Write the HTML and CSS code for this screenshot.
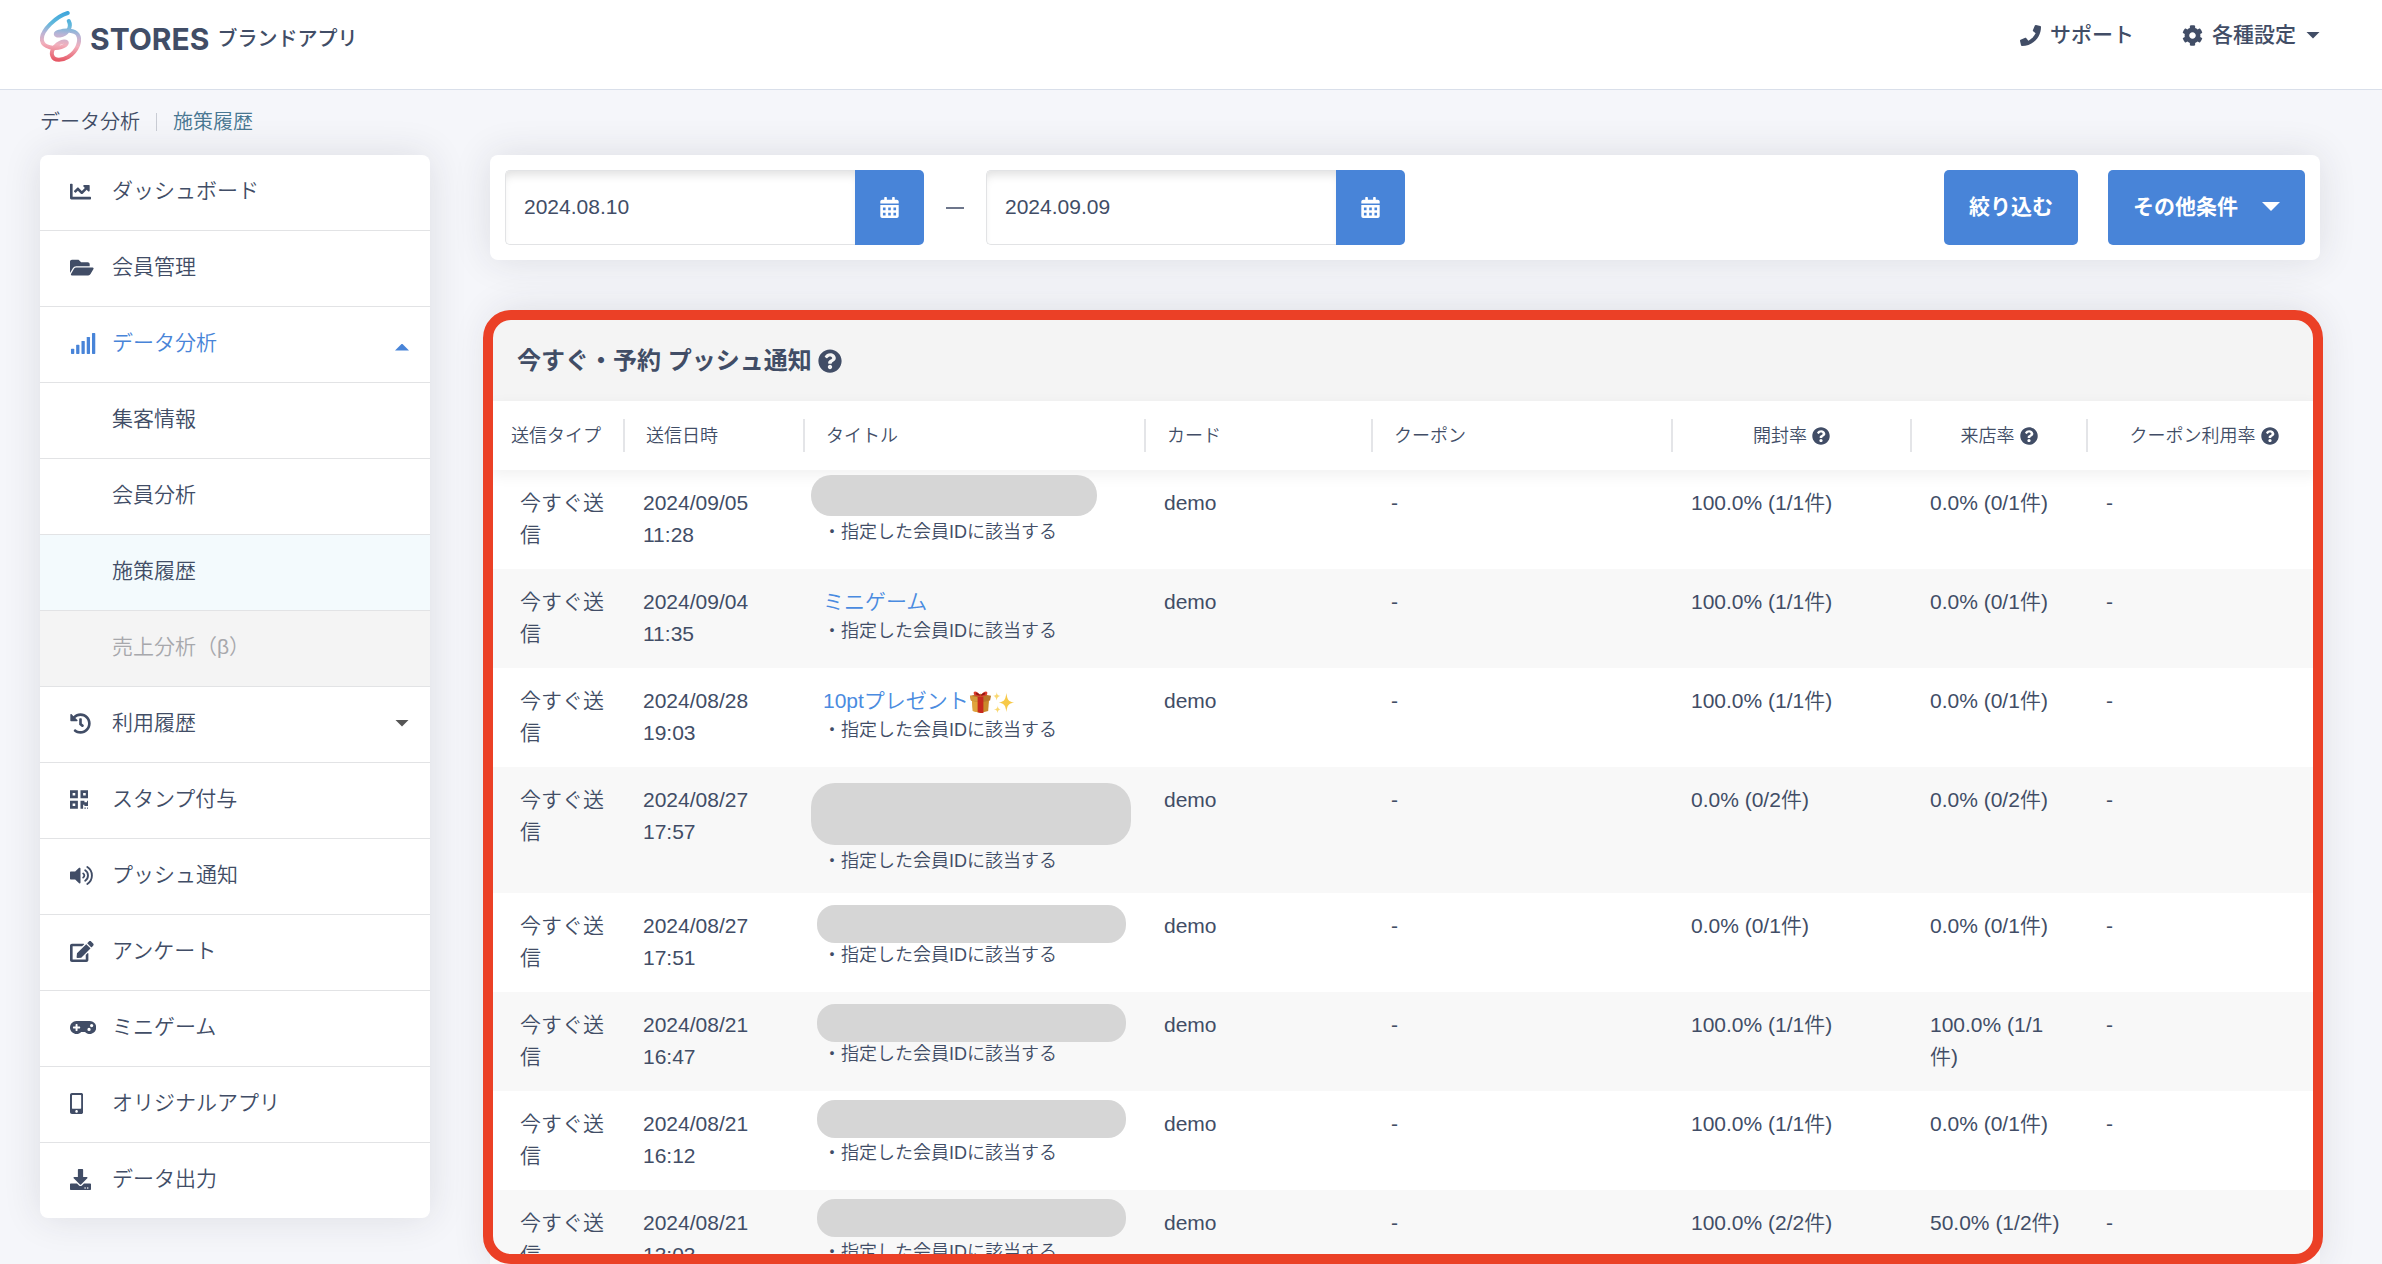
FILE: index.html
```html
<!DOCTYPE html>
<html lang="ja">
<head>
<meta charset="utf-8">
<meta name="viewport" content="width=device-width, initial-scale=1">
<title>施策履歴 | STORES ブランドアプリ</title>
<link rel="stylesheet" href="styles.css">
</head>
<body>
<svg class="sprite" aria-hidden="true">
  <symbol id="i-help" viewBox="0 0 512 512"><path d="M504 256c0 136.997-111.043 248-248 248S8 392.997 8 256C8 119.083 119.043 8 256 8s248 111.083 248 248zM262.655 90c-54.497 0-89.255 22.957-116.549 63.758-3.536 5.286-2.353 12.415 2.715 16.258l34.699 26.31c5.205 3.947 12.621 3.008 16.665-2.122 17.864-22.658 30.113-35.797 57.303-35.797 20.429 0 45.698 13.148 45.698 32.958 0 14.976-12.363 22.667-32.534 33.976C247.128 238.528 216 254.941 216 296v4c0 6.627 5.373 12 12 12h56c6.627 0 12-5.373 12-12v-1.333c0-28.462 83.186-29.647 83.186-106.667 0-58.002-60.165-102-116.531-102zM256 338c-25.365 0-46 20.635-46 46 0 25.364 20.635 46 46 46s46-20.636 46-46c0-25.365-20.635-46-46-46z"/></symbol>
  <symbol id="i-calendar" viewBox="0 0 448 512"><path fill-rule="evenodd" d="M0 464c0 26.500 21.500 48 48 48h352c26.500 0 48-21.500 48-48V192H0zM64 256h64v64H64zM192 256h64v64h-64zM320 256h64v64h-64zM64 384h64v64H64zM192 384h64v64h-64zM320 384h64v64h-64zM400 64h-48V16c0-8.800-7.200-16-16-16h-32c-8.800 0-16 7.200-16 16v48H160V16c0-8.800-7.200-16-16-16h-32c-8.800 0-16 7.200-16 16v48H48C21.500 64 0 85.500 0 112v48h448v-48c0-26.500-21.500-48-48-48z"/></symbol>
</svg>
<div class="app">
  <header class="topbar">
    <a class="brand" href="#">
      <svg class="brand-mark" viewBox="120 33 124 154" aria-hidden="true">
        <defs><linearGradient id="brand-gradient" gradientUnits="userSpaceOnUse" x1="190" y1="35" x2="175" y2="187"><stop offset="0" stop-color="#3fa6dc"/><stop offset="0.250" stop-color="#5fb8dc"/><stop offset="0.450" stop-color="#b9b4d6"/><stop offset="0.660" stop-color="#f2b0bd"/><stop offset="1" stop-color="#e5515f"/></linearGradient></defs>
        <path d="M204 39C172 48 121 92 126 122C130 144 166 148 184 142C203 136 206 124 193 125C176 127 150 148 157 168C163 187 190 181 205 172C234 153 245 122 234 104C225 90 196 90 180 95C163 99 164 109 180 107C202 104 217 82 207 63" fill="none" stroke="url(#brand-gradient)" stroke-width="12" stroke-linecap="round" stroke-linejoin="round"/>
      </svg>
      <span class="brand-name">STORES</span>
      <span class="brand-product">ブランドアプリ</span>
    </a>
    <nav class="topnav" aria-label="ヘッダー">
      <a href="#"><svg class="icon" viewBox="0 0 512 512" aria-hidden="true"><path d="M493.400 24.600l-104-24c-11.300-2.600-22.900 3.300-27.500 13.900l-48 112c-4.200 9.800-1.400 21.300 6.900 28l60.600 49.600c-36 76.700-98.900 140.500-177.200 177.200l-49.600-60.600c-6.800-8.300-18.200-11.100-28-6.900l-112 48C3.900 366.500-2 378.100.6 389.400l24 104C27.100 504.200 36.700 512 48 512c256.100 0 464-207.500 464-464 0-11.200-7.700-20.900-18.600-23.400z"/></svg>サポート</a>
      <a href="#"><svg class="icon" viewBox="0 0 512 512" aria-hidden="true"><path d="M487.400 315.700l-42.600-24.600c4.300-23.200 4.300-47 0-70.200l42.600-24.600c4.900-2.800 7.100-8.600 5.500-14-11.100-35.600-30-67.800-54.700-94.600-3.800-4.100-10-5.100-14.800-2.300L380.800 110c-17.900-15.400-38.500-27.300-60.800-35.100V25.800c0-5.600-3.900-10.500-9.400-11.700-36.700-8.200-74.300-7.800-109.200 0-5.500 1.200-9.400 6.100-9.400 11.700V75c-22.200 7.900-42.800 19.800-60.800 35.100L88.700 85.500c-4.900-2.800-11-1.900-14.800 2.300-24.700 26.700-43.600 58.900-54.700 94.600-1.700 5.400.6 11.200 5.500 14L67.300 221c-4.300 23.200-4.300 47 0 70.200l-42.600 24.600c-4.900 2.800-7.100 8.600-5.500 14 11.100 35.600 30 67.800 54.700 94.600 3.800 4.100 10 5.100 14.800 2.300l42.600-24.600c17.900 15.400 38.500 27.300 60.800 35.100v49.200c0 5.600 3.900 10.500 9.400 11.700 36.700 8.200 74.300 7.800 109.200 0 5.500-1.200 9.400-6.100 9.400-11.700v-49.200c22.200-7.900 42.800-19.800 60.800-35.100l42.600 24.600c4.900 2.800 11 1.900 14.800-2.300 24.700-26.700 43.600-58.900 54.700-94.600 1.500-5.500-.7-11.300-5.600-14.100zM256 336c-44.100 0-80-35.900-80-80s35.900-80 80-80 80 35.900 80 80-35.900 80-80 80z"/></svg>各種設定<span class="caret"></span></a>
    </nav>
  </header>

  <nav class="breadcrumb" aria-label="パンくず">
    <a href="#">データ分析</a>
    <a class="is-current" href="#" aria-current="page">施策履歴</a>
  </nav>

  <div class="layout">
    <nav class="sidebar" aria-label="メインメニュー">
      <ul class="menu">
        <li><a href="#"><span class="menu-icon"><svg viewBox="0 0 512 512" aria-hidden="true"><path d="M496 384H64V80c0-8.840-7.160-16-16-16H16C7.160 64 0 71.160 0 80v336c0 17.670 14.330 32 32 32h464c8.840 0 16-7.160 16-16v-32c0-8.840-7.160-16-16-16zM464 96H345.940c-21.380 0-32.090 25.850-16.970 40.970l32.400 32.400L288 242.750l-73.370-73.370c-12.500-12.500-32.760-12.500-45.250 0l-68.690 68.690c-6.250 6.250-6.250 16.380 0 22.630l22.620 22.620c6.250 6.250 16.380 6.250 22.630 0L192 237.250l73.370 73.370c12.500 12.500 32.760 12.500 45.250 0l96-96 32.400 32.400c15.120 15.120 40.970 4.410 40.970-16.970V112c.01-8.840-7.150-16-15.990-16z"/></svg></span>ダッシュボード</a></li>
        <li><a href="#"><span class="menu-icon"><svg viewBox="0 0 576 512" aria-hidden="true"><path d="M572.694 292.093L500.270 416.248A63.997 63.997 0 0 1 444.989 448H45.025c-18.523 0-30.064-20.093-20.731-36.093l72.424-124.155A64 64 0 0 1 152 256h399.964c18.523 0 30.064 20.093 20.730 36.093zM152 224h328v-48c0-26.510-21.490-48-48-48H272l-64-64H48C21.490 64 0 85.490 0 112v278.046l69.077-118.418C86.214 242.250 117.989 224 152 224z"/></svg></span>会員管理</a></li>
        <li>
          <a class="is-open" href="#" aria-expanded="true"><span class="menu-icon"><svg viewBox="0 0 640 512" aria-hidden="true"><rect x="24" y="384" width="80" height="128" rx="16"/><rect x="150" y="288" width="80" height="224" rx="16"/><rect x="280" y="192" width="80" height="320" rx="16"/><rect x="408" y="96" width="80" height="416" rx="16"/><rect x="536" y="0" width="80" height="512" rx="16"/></svg></span>データ分析<span class="caret caret-up"></span></a>
          <ul class="submenu">
            <li><a href="#">集客情報</a></li>
            <li><a href="#">会員分析</a></li>
            <li><a class="is-active" href="#">施策履歴</a></li>
            <li><a class="is-disabled" href="#" aria-disabled="true">売上分析（β）</a></li>
          </ul>
        </li>
        <li><a href="#" aria-expanded="false"><span class="menu-icon"><svg viewBox="0 0 512 512" aria-hidden="true"><path d="M504 255.531c.253 136.640-111.180 248.372-247.820 248.468-59.015.042-113.223-20.530-155.822-54.911-11.077-8.940-11.905-25.541-1.839-35.607l11.267-11.267c8.609-8.609 22.353-9.551 31.891-1.984C173.062 425.135 212.781 440 256 440c101.705 0 184-82.311 184-184 0-101.705-82.311-184-184-184-48.814 0-93.149 18.969-126.068 49.932l50.754 50.754c10.080 10.080 2.941 27.314-11.313 27.314H24c-8.837 0-16-7.163-16-16V38.627c0-14.254 17.234-21.393 27.314-11.314l49.372 49.372C129.209 34.136 189.552 8 256 8c136.810 0 247.747 110.780 248 247.531zm-180.912 78.784l9.823-12.630c8.138-10.463 6.253-25.542-4.210-33.679L288 256.349V152c0-13.255-10.745-24-24-24h-16c-13.255 0-24 10.745-24 24v135.651l65.409 50.874c10.463 8.137 25.541 6.253 33.679-4.210z"/></svg></span>利用履歴<span class="caret caret-gray"></span></a></li>
        <li><a href="#"><span class="menu-icon"><svg viewBox="0 0 448 512" aria-hidden="true"><path d="M0 224h192V32H0v192zM64 96h64v64H64V96zm192-64v192h192V32H256zm128 128h-64V96h64v64zM0 480h192V288H0v192zm64-128h64v64H64v-64zm352-64h32v128h-96v-32h-32v96h-64V288h96v32h64v-32zm0 160h32v32h-32v-32zm-64 0h32v32h-32v-32z"/></svg></span>スタンプ付与</a></li>
        <li><a href="#"><span class="menu-icon"><svg viewBox="0 0 576 512" aria-hidden="true"><path d="M215.030 71.050L126.060 160H24c-13.260 0-24 10.740-24 24v144c0 13.250 10.740 24 24 24h102.060l88.970 88.950c15.030 15.030 40.970 4.470 40.970-16.970V88.020c0-21.460-25.960-31.980-40.970-16.970z"/><path d="M322 208a56 56 0 0 1 0 96M370 130a150 150 0 0 1 0 252M422 50a245 245 0 0 1 0 412" fill="none" stroke="currentColor" stroke-width="46" stroke-linecap="round"/></svg></span>プッシュ通知</a></li>
        <li><a href="#"><span class="menu-icon"><svg viewBox="0 0 576 512" aria-hidden="true"><path d="M402.600 83.200l90.200 90.200c3.800 3.800 3.800 10 0 13.800L274.400 405.600l-92.800 10.300c-12.400 1.400-22.900-9.100-21.500-21.500l10.300-92.800L388.800 83.200c3.800-3.800 10-3.800 13.800 0zm162-22.900l-48.800-48.800c-15.200-15.200-39.900-15.200-55.200 0l-35.400 35.400c-3.800 3.800-3.800 10 0 13.800l90.200 90.200c3.800 3.800 10 3.800 13.800 0l35.400-35.400c15.200-15.300 15.200-40 0-55.200zM384 346.200V448H64V128h229.800c3.200 0 6.200-1.300 8.500-3.500l40-40c7.600-7.600 2.200-20.500-8.500-20.500H48C21.500 64 0 85.500 0 112v352c0 26.500 21.500 48 48 48h352c26.500 0 48-21.500 48-48V306.200c0-10.700-12.900-16-20.500-8.500l-40 40c-2.200 2.300-3.500 5.300-3.500 8.500z"/></svg></span>アンケート</a></li>
        <li><a href="#"><span class="menu-icon"><svg viewBox="0 0 640 512" aria-hidden="true"><path d="M480.070 96H160a160 160 0 1 0 114.240 272h91.500A160 160 0 1 0 480.070 96zM248 268a12 12 0 0 1-12 12h-52v52a12 12 0 0 1-12 12h-24a12 12 0 0 1-12-12v-52H84a12 12 0 0 1-12-12v-24a12 12 0 0 1 12-12h52v-52a12 12 0 0 1 12-12h24a12 12 0 0 1 12 12v52h52a12 12 0 0 1 12 12zm216 76a40 40 0 1 1 40-40 40 40 0 0 1-40 40zm64-96a40 40 0 1 1 40-40 40 40 0 0 1-40 40z"/></svg></span>ミニゲーム</a></li>
        <li><a href="#"><span class="menu-icon"><svg viewBox="0 0 320 512" aria-hidden="true"><path d="M272 0H48C21.500 0 0 21.500 0 48v416c0 26.500 21.500 48 48 48h224c26.500 0 48-21.500 48-48V48c0-26.500-21.500-48-48-48zM160 480c-17.700 0-32-14.300-32-32s14.300-32 32-32 32 14.300 32 32-14.300 32-32 32zm112-108c0 6.600-5.400 12-12 12H60c-6.600 0-12-5.400-12-12V60c0-6.600 5.400-12 12-12h200c6.600 0 12 5.400 12 12v312z"/></svg></span>オリジナルアプリ</a></li>
        <li><a href="#"><span class="menu-icon"><svg viewBox="0 0 512 512" aria-hidden="true"><path d="M216 0h80c13.300 0 24 10.700 24 24v168h87.700c17.800 0 26.700 21.500 14.100 34.100L269.700 378.300c-7.500 7.500-19.800 7.500-27.300 0L90.100 226.100c-12.600-12.600-3.700-34.100 14.100-34.100H192V24c0-13.300 10.700-24 24-24zm296 376v112c0 13.300-10.700 24-24 24H24c-13.300 0-24-10.700-24-24V376c0-13.300 10.700-24 24-24h146.700l49 49c20.100 20.100 52.500 20.100 72.600 0l49-49H488c13.300 0 24 10.700 24 24zm-124 88c0-11-9-20-20-20s-20 9-20 20 9 20 20 20 20-9 20-20zm64 0c0-11-9-20-20-20s-20 9-20 20 9 20 20 20 20-9 20-20z"/></svg></span>データ出力</a></li>
      </ul>
    </nav>

    <main class="main">
      <form class="filter">
        <div class="date-field">
          <input type="text" value="2024.08.10" aria-label="開始日">
          <button type="button" aria-label="開始日を選択"><svg class="icon-calendar" aria-hidden="true"><use href="#i-calendar"/></svg></button>
        </div>
        <span class="range-dash"></span>
        <div class="date-field">
          <input type="text" value="2024.09.09" aria-label="終了日">
          <button type="button" aria-label="終了日を選択"><svg class="icon-calendar" aria-hidden="true"><use href="#i-calendar"/></svg></button>
        </div>
        <div class="filter-actions">
          <button class="btn" type="button">絞り込む</button>
          <button class="btn" type="button">その他条件<span class="caret caret-large"></span></button>
        </div>
      </form>

      <section class="history" aria-labelledby="history-title">
        <div class="card">
          <h2 class="card-title" id="history-title">今すぐ・予約 プッシュ通知<svg class="help" aria-hidden="true"><use href="#i-help"/></svg></h2>
          <table class="history-table">
            <colgroup><col class="col-type"><col class="col-date"><col class="col-title"><col class="col-card"><col class="col-coupon"><col class="col-open"><col class="col-visit"><col class="col-usage"></colgroup>
            <thead>
              <tr>
                <th><span>送信タイプ</span></th>
                <th><span>送信日時</span></th>
                <th><span>タイトル</span></th>
                <th><span>カード</span></th>
                <th><span>クーポン</span></th>
                <th class="center"><span>開封率<svg class="help" aria-hidden="true"><use href="#i-help"/></svg></span></th>
                <th class="center"><span>来店率<svg class="help" aria-hidden="true"><use href="#i-help"/></svg></span></th>
                <th class="center"><span>クーポン利用率<svg class="help" aria-hidden="true"><use href="#i-help"/></svg></span></th>
              </tr>
            </thead>
            <tbody>
              <tr><td>今すぐ送信</td><td>2024/09/05 11:28</td><td><div class="title"><span class="mask mask-first"></span></div><div class="target">・指定した会員IDに該当する</div></td><td>demo</td><td>-</td><td>100.0% (1/1件)</td><td>0.0% (0/1件)</td><td>-</td></tr>
              <tr><td>今すぐ送信</td><td>2024/09/04 11:35</td><td><div class="title"><a href="#">ミニゲーム</a></div><div class="target">・指定した会員IDに該当する</div></td><td>demo</td><td>-</td><td>100.0% (1/1件)</td><td>0.0% (0/1件)</td><td>-</td></tr>
              <tr><td>今すぐ送信</td><td>2024/08/28 19:03</td><td><div class="title"><a href="#">10ptプレゼント<svg class="emoji" viewBox="0 0 24 24" role="img" aria-label="プレゼント"><path d="M3 9h18l-1 13-8 2-8-2z" fill="#c98a2b"/><path d="M3 9l9 2v13l-8-2z" fill="#e0a33c"/><path d="M1 6l11-2 11 2-1 5-10 2-10-2z" fill="#b9772a"/><path d="M1 6l11 2v5l-10-2z" fill="#d59a3a"/><path d="M9 7h6v17l-3 0-3-1z" fill="#c8291f"/><path d="M12 6C9 1 4 0 5 4c0 2 4 3 7 3 3 0 7-1 7-3 1-4-4-3-7 2z" fill="#dc3a2c"/><path d="M12 6c-2-3-5-4-5-2 0 1 3 2 5 2 2 0 5-1 5-2 0-2-3-1-5 2z" fill="#8f1812"/></svg><svg class="emoji" viewBox="0 0 24 24" role="img" aria-label="キラキラ"><path d="M15 3c1 7 2 9 8 10-6 1-7 3-8 10-1-7-2-9-8-10 6-1 7-3 8-10z" fill="#f7c948"/><path d="M5 1c0 4 1 5 4 5-3 1-4 2-4 5-1-3-1-4-4-5 3 0 4-1 4-5zM6 16c0 3 1 4 3 4-2 1-3 1-3 4-1-3-1-3-4-4 3 0 4-1 4-4z" fill="#f9d871"/></svg></a></div><div class="target">・指定した会員IDに該当する</div></td><td>demo</td><td>-</td><td>100.0% (1/1件)</td><td>0.0% (0/1件)</td><td>-</td></tr>
              <tr><td>今すぐ送信</td><td>2024/08/27 17:57</td><td><div class="title title-double"><span class="mask mask-double"></span></div><div class="target">・指定した会員IDに該当する</div></td><td>demo</td><td>-</td><td>0.0% (0/2件)</td><td>0.0% (0/2件)</td><td>-</td></tr>
              <tr><td>今すぐ送信</td><td>2024/08/27 17:51</td><td><div class="title"><span class="mask"></span></div><div class="target">・指定した会員IDに該当する</div></td><td>demo</td><td>-</td><td>0.0% (0/1件)</td><td>0.0% (0/1件)</td><td>-</td></tr>
              <tr><td>今すぐ送信</td><td>2024/08/21 16:47</td><td><div class="title"><span class="mask"></span></div><div class="target">・指定した会員IDに該当する</div></td><td>demo</td><td>-</td><td>100.0% (1/1件)</td><td>100.0% (1/1件)</td><td>-</td></tr>
              <tr><td>今すぐ送信</td><td>2024/08/21 16:12</td><td><div class="title"><span class="mask mask-high"></span></div><div class="target">・指定した会員IDに該当する</div></td><td>demo</td><td>-</td><td>100.0% (1/1件)</td><td>0.0% (0/1件)</td><td>-</td></tr>
              <tr><td>今すぐ送信</td><td>2024/08/21 13:03</td><td><div class="title"><span class="mask mask-high"></span></div><div class="target">・指定した会員IDに該当する</div></td><td>demo</td><td>-</td><td>100.0% (2/2件)</td><td>50.0% (1/2件)</td><td>-</td></tr>
            </tbody>
          </table>
        </div>
        <div class="highlight" aria-hidden="true"></div>
      </section>
    </main>
  </div>
</div>
</body>
</html>
```
FILE: styles.css
```css
:root {
  --text: #414d66;
  --blue: #4884d8;
  --line: #e2e3e5;
  --page: #f5f6fa;
  --shadow: 0 0 38px rgba(40, 40, 60, 0.12);
}

* {
  box-sizing: border-box;
}

body {
  margin: 0;
  background: var(--page);
  color: var(--text);
  font-family: "Liberation Sans", "Noto Sans CJK JP", sans-serif;
  font-size: 21px;
  font-weight: 350;
  line-height: 32px;
}

a {
  color: inherit;
  text-decoration: none;
}

ul {
  margin: 0;
  padding: 0;
  list-style: none;
}

button,
input {
  margin: 0;
  font: inherit;
  color: inherit;
}

svg {
  fill: currentColor;
}

.sprite {
  display: none;
}

.app {
  display: flex;
  flex-direction: column;
  height: 100vh;
  overflow: hidden;
}

/* Header */
.topbar {
  display: flex;
  flex: none;
  align-items: flex-start;
  justify-content: space-between;
  padding: 11px 62px 27px 40px;
  border-bottom: 1px solid #d9dfea;
  background: #fff;
}

.brand {
  display: flex;
  align-items: center;
}

.brand span {
  padding-top: 5px;
}

.brand-mark {
  width: 41px;
  height: 51px;
  margin-right: 9px;
}

.brand-name {
  margin-right: 8px;
  font-family: Inter, "Liberation Sans", sans-serif;
  font-size: 30px;
  font-weight: 700;
}

.brand-product {
  font-size: 20px;
  font-weight: 500;
}

.topnav {
  display: flex;
  gap: 48px;
  padding-top: 8px;
  font-weight: 500;
}

.topnav a {
  display: flex;
  align-items: center;
}

.icon {
  width: 21px;
  height: 21px;
  margin-right: 9px;
}

.caret {
  width: 14px;
  height: 7px;
  background: currentColor;
  clip-path: polygon(0 0, 100% 0, 50% 100%);
}

.topnav .caret {
  margin-left: 10px;
}

.caret-up {
  margin-top: 8px;
  clip-path: polygon(0 100%, 100% 100%, 50% 0);
}

.caret-gray {
  background: #555;
}

.caret-large {
  width: 18px;
  height: 9px;
}

/* Breadcrumb */
.breadcrumb {
  display: flex;
  flex: none;
  align-items: center;
  padding: 16px 40px 17px;
  font-size: 20px;
}

.breadcrumb .is-current {
  display: flex;
  align-items: center;
  color: #487792;
}

.breadcrumb .is-current::before {
  width: 1px;
  height: 18px;
  margin: 0 16px;
  background: #c9ccd4;
  content: "";
}

/* Page columns */
.layout {
  display: grid;
  flex: 1;
  grid-template-columns: 390px minmax(0, 1fr);
  gap: 60px;
  min-height: 0;
  padding: 0 62px 0 40px;
}

.sidebar {
  align-self: start;
  overflow: hidden;
  border-radius: 8px;
  background: #fff;
  box-shadow: var(--shadow);
}

.menu a {
  display: flex;
  align-items: center;
  padding: 20px 21px 23px 30px;
  border-bottom: 1px solid var(--line);
}

.menu > li:last-child > a {
  border-bottom: 0;
}

.menu-icon {
  display: flex;
  width: 42px;
}

.menu-icon svg {
  height: 21px;
}

.menu .caret {
  margin-left: auto;
}

.menu .is-open {
  color: var(--blue);
}

.menu .submenu a {
  padding-left: 72px;
}

.menu .is-active {
  background: #f3fafd;
}

.menu .is-disabled {
  background: #f4f4f4;
  color: #a7a8ac;
}

/* Filter bar */
.main {
  display: flex;
  flex-direction: column;
  min-height: 0;
}

.filter {
  display: flex;
  flex: none;
  align-items: center;
  padding: 15px;
  border-radius: 8px;
  background: #fff;
  box-shadow: var(--shadow);
}

.date-field {
  display: flex;
  height: 75px;
}

.date-field input {
  width: 350px;
  padding: 0 18px 2px;
  border: 1px solid var(--line);
  border-right: 0;
  border-radius: 5px 0 0 5px;
  outline: 0;
  background: #fff;
  box-shadow: inset 0 8px 10px -4px rgba(0, 0, 0, 0.12);
}

.date-field button {
  display: flex;
  align-items: center;
  justify-content: center;
  width: 69px;
  padding: 0;
  border: 0;
  border-radius: 0 5px 5px 0;
  background: var(--blue);
  color: #fff;
}

.icon-calendar {
  width: 19px;
  height: 21px;
}

.range-dash {
  width: 18px;
  height: 2px;
  margin: 0 22px;
  background: #6d768b;
}

.filter-actions {
  display: flex;
  gap: 30px;
  margin-left: auto;
}

.btn {
  display: flex;
  align-items: center;
  gap: 24px;
  height: 75px;
  padding: 0 25px 2px;
  border: 0;
  border-radius: 5px;
  background: var(--blue);
  color: #fff;
  font-weight: 700;
}

/* Push notification history */
.history {
  position: relative;
  flex: 1;
  min-height: 0;
  margin-top: 50px;
}

.highlight {
  position: absolute;
  inset: 0 -3px 0 -7px;
  z-index: 3;
  border: 10px solid #eb4026;
  border-radius: 28px;
  pointer-events: none;
}

.card {
  height: 100%;
  overflow: hidden;
  border-radius: 28px 28px 0 0;
  background: #fff;
  box-shadow: var(--shadow);
}

.card-title {
  display: flex;
  align-items: center;
  margin: 0;
  padding: 35px 27px 24px;
  background: #f4f4f4;
  font-size: 24px;
  font-weight: 700;
}

.card-title .help {
  width: 24px;
  height: 24px;
  margin-left: 6px;
}

.history-table {
  width: 100%;
  border-spacing: 0;
  table-layout: fixed;
}

.col-type {
  width: 135px;
}

.col-date {
  width: 180px;
}

.col-title {
  width: 341px;
}

.col-card {
  width: 227px;
}

.col-coupon {
  width: 300px;
}

.col-open {
  width: 239px;
}

.col-visit {
  width: 176px;
}

.col-usage {
  width: 232px;
}

.history-table thead {
  position: relative;
  z-index: 1;
  background: #fff;
  box-shadow: 0 5px 15px rgba(0, 0, 0, 0.06);
}

.history-table th {
  padding: 18px 0;
  font-size: 18px;
  font-weight: inherit;
  text-align: left;
}

.history-table th span {
  display: flex;
  align-items: center;
  height: 33px;
  padding-left: 21px;
  border-right: 2px solid #e4e5e8;
}

.history-table th:last-child span {
  border-right: 0;
}

.history-table .center span {
  justify-content: center;
  padding-left: 0;
}

th .help {
  width: 18px;
  height: 18px;
  margin-left: 5px;
}

.history-table td {
  padding: 17px 18px 18px;
  vertical-align: top;
}

.history-table td:first-child {
  padding-right: 15px;
  padding-left: 30px;
}

.history-table tbody tr:nth-child(even) {
  background: #f8f8f8;
}

.title {
  position: relative;
  height: 32px;
}

.title-double {
  height: 64px;
}

.title a {
  display: flex;
  align-items: center;
  color: #4a8be0;
}

.emoji {
  width: 23px;
  height: 23px;
}

.target {
  height: 27px;
  font-size: 18px;
  line-height: 27px;
}

/* Gray covers laid over the message titles */
.mask {
  position: absolute;
  top: -5px;
  left: -6px;
  width: 309px;
  height: 38px;
  border-radius: 18px;
  background: #d6d6d6;
}

.mask-high {
  top: -8px;
}

.mask-first {
  top: -12px;
  left: -12px;
  z-index: 2;
  width: 286px;
  height: 41px;
  border-radius: 20px;
}

.mask-double {
  top: -1px;
  left: -12px;
  width: 320px;
  height: 62px;
  border-radius: 24px;
}
```
